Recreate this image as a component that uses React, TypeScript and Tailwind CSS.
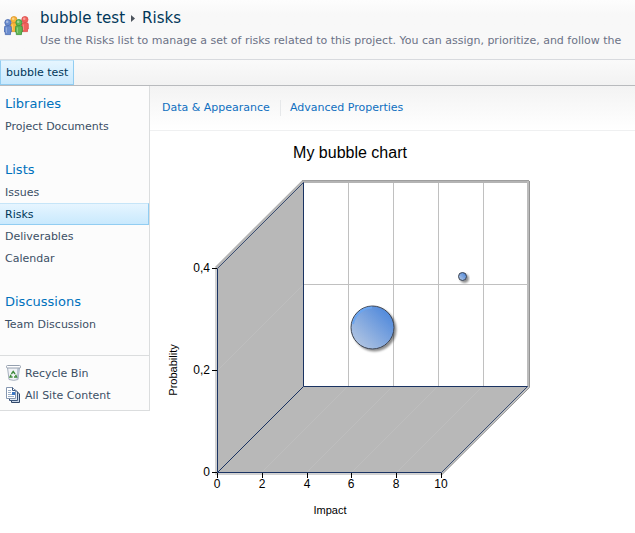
const navGroups = [
  { title: 'Libraries', items: ['Project Documents'] },
  { title: 'Lists', items: ['Issues', 'Risks', 'Deliverables', 'Calendar'] },
  { title: 'Discussions', items: ['Team Discussion'] },
]

function Person({ x, y, fill, stroke }: { x: number; y: number; fill: string; stroke: string }) {
  return (
    <g transform={`translate(${x} ${y})`} fill={fill} stroke={stroke} strokeWidth="0.8">
      <path d="M0.5 8.2Q0.5 6.8 2 6.8H5.6Q7.3 6.8 7.3 8.2V13H6.5V15.6H1.3V13H0.5Z" />
      <circle cx="3.9" cy="3.6" r="3.1" />
      <circle cx="3.2" cy="2.7" r="1.3" fill="#fff" fillOpacity="0.4" stroke="none" />
      <path d="M2.4 8.5V14" stroke="#fff" strokeOpacity="0.4" />
    </g>
  )
}

function TeamIcon() {
  return (
    <svg width="26" height="20" viewBox="0 0 26 20" aria-hidden="true">
      <Person x={6} y={0} fill="#f8b53a" stroke="#dc9426" />
      <Person x={17} y={0} fill="#f0625c" stroke="#dc4c4a" />
      <Person x={0} y={3} fill="#6a8cce" stroke="#4768b0" />
      <Person x={11} y={3} fill="#62b852" stroke="#3a9038" />
    </svg>
  )
}

function RecycleIcon() {
  return (
    <svg width="16" height="16" viewBox="0 0 16 16" aria-hidden="true">
      <path d="M1.5 2.5L3 14.5Q8 16.2 12 14.5L13.5 2.5Z" fill="#f1f3f7" stroke="#a5afbd" />
      <path d="M11.2 3.5L10.5 15L12 14.5L13.3 3Z" fill="#b9c4d2" />
      <rect x="0.5" y="0.5" width="14" height="2.5" rx="1" fill="#fff" stroke="#949fae" />
      <path d="M5.4 9L7.2 6.4L9 9M9.6 9.8L10.6 12H8M6.6 12H4L5 9.8" fill="none" stroke="#3f8b3c" strokeWidth="1.4" />
    </svg>
  )
}

function ContentIcon() {
  return (
    <svg width="16" height="16" viewBox="0 0 16 16" aria-hidden="true">
      <path d="M5.5 4.5H11L13.5 7V15.5H5.5Z" fill="#c9d6e8" stroke="#2f4668" />
      <path d="M3.5 2.5H9L11.5 5V13.5H3.5Z" fill="#e3ebf5" stroke="#3c557a" />
      <path d="M0.5 0.5H6.5L9.5 3.5V11.5H0.5Z" fill="#fff" stroke="#8496b0" />
      <path d="M6.5 0.5V3.5H9.5" fill="none" stroke="#3c557a" />
      <path d="M2 3.5H5M2 5.5H5M2 7.5H8M2 9.5H8" stroke="#9dafc6" />
      <rect x="6" y="5" width="3" height="3" fill="#3a76c4" />
    </svg>
  )
}

// Front plane origin, back plane origin and the depth between them
const front = { x: 67, y: 341, width: 224 }
const depth = 86
const back = { x: front.x + depth, y: front.y - depth, width: 225, height: 204 }
const xTicks = [0, 2, 4, 6, 8, 10]
const yTicks = [
  { label: '0', y: 341 },
  { label: '0,2', y: 239 },
  { label: '0,4', y: 137 },
]

function BubbleChart() {
  return (
    <svg
      width="400"
      height="400"
      viewBox="0 0 400 400"
      role="img"
      aria-label="My bubble chart"
      className="font-['Liberation_Sans',sans-serif]"
    >
      <defs>
        <linearGradient id="bubble" x1="0.15" y1="0.9" x2="0.85" y2="0.2">
          <stop offset="0" stopColor="#b0c4e2" />
          <stop offset="1" stopColor="#568ddc" />
        </linearGradient>
        <filter id="shadow" x="-30%" y="-30%" width="170%" height="170%">
          <feDropShadow dx="2" dy="2" stdDeviation="0.8" floodColor="#000" floodOpacity="0.45" />
        </filter>
      </defs>

      <text x="200" y="27" fontSize="16" textAnchor="middle">My bubble chart</text>

      {/* outer edges */}
      <path d="M66 137V343H291" fill="none" stroke="#d2d2d2" strokeWidth="2" />
      <path d="M66 137L153 50.5H378" fill="none" stroke="#b4b4b4" strokeWidth="3" />
      <path d="M152 49.5H379" fill="none" stroke="#9e9e9e" />
      <path d="M378 50V256L292 342" fill="none" stroke="#bcbcbc" strokeWidth="2" />
      <path d="M379.5 50V256.5L292 343.5" fill="none" stroke="#949494" />

      {/* back wall */}
      <rect x={back.x} y="52" width={back.width - 1} height={back.height} fill="#fff" />
      {[1, 2, 3, 4].map((i) => (
        <path key={i} d={`M${back.x + i * 45 + 0.5} 52V${back.y}`} stroke="#c0c0c0" />
      ))}
      <path d={`M${back.x} 153.5h${back.width}`} stroke="#c0c0c0" />

      {/* side wall and floor */}
      <path d="M67.5 137.5L153.5 51.5V255.5L67.5 341.5Z" fill="#b8b8b8" />
      <path d="M67.5 341.5L153.5 255.5H377.5L291.5 341.5Z" fill="#b8b8b8" />
      <path d="M67.5 239.5L153.5 153.5" stroke="#bebebe" />
      {[1, 2, 3, 4].map((i) => (
        <path key={i} d={`M${front.x + i * 45} 341l86 -86`} stroke="#bebebe" />
      ))}
      <g fill="none" stroke="#1a3362">
        <path d="M67.5 137.5V341.5H291.5" />
        <path d="M153.5 51.5V255.5H377.5" />
        <path d="M67.5 341.5L153.5 255.5" />
        <path d="M67.5 137.5L153.5 51.5M291.5 341.5L377.5 255.5" strokeOpacity="0.8" />
      </g>

      {/* axes */}
      <g fontSize="12" textAnchor="end">
        {yTicks.map((tick) => (
          <g key={tick.label}>
            <path d={`M62 ${tick.y + 0.5}h5`} stroke="#000" />
            <text x="60" y={tick.y + 4}>{tick.label}</text>
          </g>
        ))}
      </g>
      <g fontSize="12" textAnchor="middle">
        {xTicks.map((tick) => {
          const x = front.x + Math.round((tick * front.width) / 10)
          return (
            <g key={tick}>
              <path d={`M${x + 0.5} 342v5`} stroke="#000" />
              <text x={x} y="357">{tick}</text>
            </g>
          )
        })}
      </g>
      <text x="180" y="383" fontSize="11" textAnchor="middle">Impact</text>
      <text fontSize="11" textAnchor="middle" transform="translate(27 239) rotate(-90)">Probability</text>

      {/* bubbles */}
      <g fill="url(#bubble)" stroke="#3c4350" filter="url(#shadow)">
        <circle cx="222.5" cy="196.5" r="21.5" />
      </g>
      <path d="M203 193A20 20 0 0 1 222 176.500" fill="none" stroke="#6aa5f0" strokeWidth="2" />
      <g fill="url(#bubble)" stroke="#3c4350" filter="url(#shadow)">
        <circle cx="312.5" cy="145.5" r="4" />
      </g>
    </svg>
  )
}

export default function App() {
  return (
    <div className="min-h-screen overflow-hidden bg-white font-['DejaVu_Sans',sans-serif] text-[11px] text-[#3b4f65]">
      <header className="flex h-[60px] items-start border-b border-[#d8dade] bg-linear-to-b from-[#fdfdfd] to-[#f8f8f8] to-25% pl-1">
        <div className="w-9 shrink-0 pt-4">
          <TeamIcon />
        </div>
        <div className="min-w-0 whitespace-nowrap pt-2">
          <h1 className="flex items-center text-[15px] leading-5 text-[#003759]">
            <a href="#site">bubble test</a>
            <svg width="17" height="10" viewBox="0 0 17 10" aria-hidden="true">
              <path d="M6 2L10 5.500L6 9Z" fill="#4c535c" />
            </svg>
            Risks
          </h1>
          <p className="pt-1 leading-[18px] text-[#6b7286]">
            Use the Risks list to manage a set of risks related to this project. You can assign, prioritize, and follow the
          </p>
        </div>
      </header>

      <nav className="flex h-[26px] border-b border-[#b8babd] bg-linear-to-b from-[#fafafa] to-[#f2f2f2]">
        <a
          href="#site"
          className="border border-[#91cdf2] border-t-[#c6e5f8] bg-linear-to-b from-[#e6f5ff] to-[#c9e9fd] px-[5px] leading-6 text-[#003759]"
        >
          bubble test
        </a>
      </nav>

      <div className="flex items-start">
        <aside className="w-[150px] shrink-0 border-r border-b border-[#dbddde] bg-[#fcfcfc]">
          <nav className="flex flex-col gap-[22px] pt-[7px] pb-5">
            {navGroups.map((group) => (
              <section key={group.title}>
                <h2 className="px-[5px] text-[13px] leading-[22px] text-[#0072bc]">
                  <a href="#group">{group.title}</a>
                </h2>
                <ul>
                  {group.items.map((item) => (
                    <li key={item}>
                      {item === 'Risks' ? (
                        <a
                          href="#item"
                          aria-current="page"
                          className="block border-y border-r border-[#91cdf2] border-t-[#c6e5f8] bg-linear-to-b from-[#e6f5ff] to-[#c9e9fd] px-[5px] pt-[2px] leading-[18px] text-[#003759]"
                        >
                          {item}
                        </a>
                      ) : (
                        <a href="#item" className="block px-[5px] pt-[2px] leading-5">{item}</a>
                      )}
                    </li>
                  ))}
                </ul>
              </section>
            ))}
          </nav>
          <div className="border-t border-[#dbddde] px-[6px] pt-[6px] pb-1">
            <a href="#recycle" className="flex items-center gap-[3px]">
              <RecycleIcon />
              <span className="pt-[2px] leading-5">Recycle Bin</span>
            </a>
            <a href="#content" className="flex items-center gap-[3px]">
              <ContentIcon />
              <span className="pt-[2px] leading-5">All Site Content</span>
            </a>
          </div>
        </aside>

        <main className="min-w-0 flex-1">
          <div className="flex h-[45px] items-center border-b border-[#eff0f1] bg-linear-to-b from-[#f3f3f3] to-white px-3 text-[#0f6fc0]">
            <a href="#data" className="border-r border-[#e6e8ea] pr-[10px] leading-4">Data &amp; Appearance</a>
            <a href="#advanced" className="pl-[9px] leading-4">Advanced Properties</a>
          </div>
          <BubbleChart />
        </main>
      </div>
    </div>
  )
}
